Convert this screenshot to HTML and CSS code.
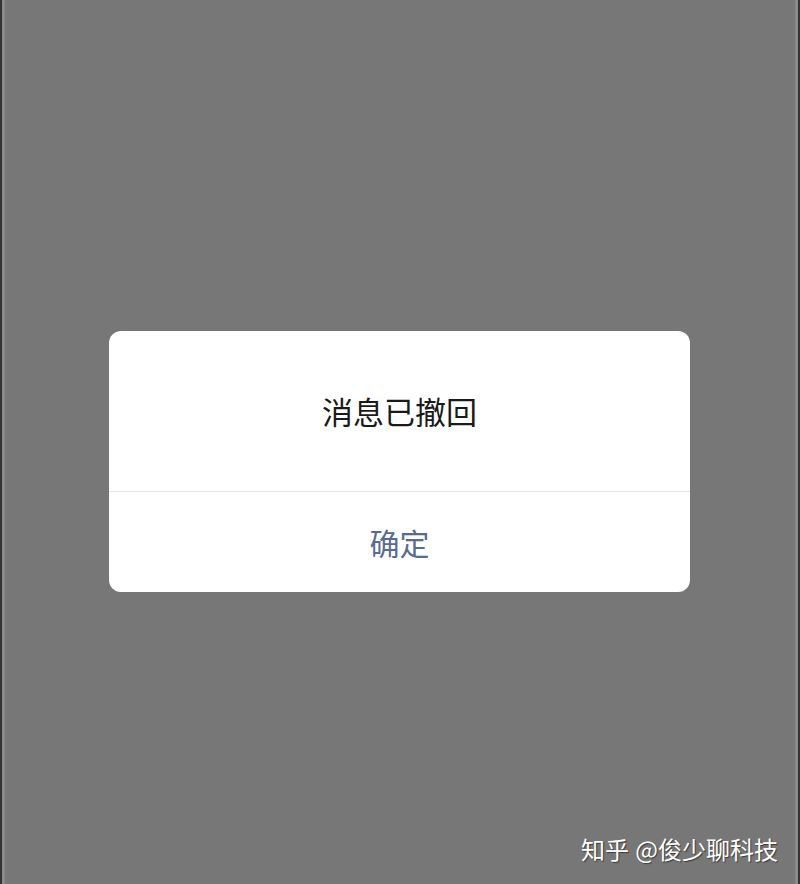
FILE: index.html
```html
<!DOCTYPE html>
<html lang="zh-CN">
<head>
    <meta charset="UTF-8">
    <meta name="viewport" content="width=device-width, initial-scale=1.0">
    <title>消息已撤回</title>
    <link rel="stylesheet" href="styles.css">
</head>
<body>
    <div class="screen">
        <!-- 提示框 -->
        <div class="dialog">
            <div class="dialog-title">消息已撤回</div>
            <div class="dialog-btn">确定</div>
        </div>

        <!-- 水印 -->
        <div class="watermark">知乎 @俊少聊科技</div>
    </div>
</body>
</html>
```

FILE: styles.css
```css
* {
    margin: 0;
    padding: 0;
    box-sizing: border-box;
}

body {
    font-family: "Noto Sans CJK SC", "Noto Sans", sans-serif;
    background-color: #777;
}

.screen {
    height: 884px;
    display: flex;
    flex-direction: column;
    padding: 331px 0 0 107px;
    border-left: 2px solid #333;
    border-right: 2px solid #333;
    box-shadow: inset 3px 0 0 #8a8a8a, inset -3px 0 0 #8a8a8a;
}

/* 提示框样式 */
.dialog {
    width: 581px;
    background-color: #fff;
    border-radius: 12px;
    overflow: hidden;
}

.dialog-title {
    height: 161px;
    display: flex;
    align-items: center;
    justify-content: center;
    font-size: 31px;
    color: #1a1a1a;
    border-bottom: 1px solid #e3e3e3;
    padding-bottom: 2px;
}

.dialog-btn {
    height: 100px;
    display: flex;
    align-items: center;
    justify-content: center;
    font-size: 30px;
    color: #576b94;
}

.watermark {
    margin-top: auto;
    align-self: flex-end;
    margin-right: 20px;
    margin-bottom: 18px;
    font-size: 24px;
    word-spacing: 1px;
    color: #fff;
    text-shadow: 1px 1px 1px rgba(0,0,0,0.5);
}
```
